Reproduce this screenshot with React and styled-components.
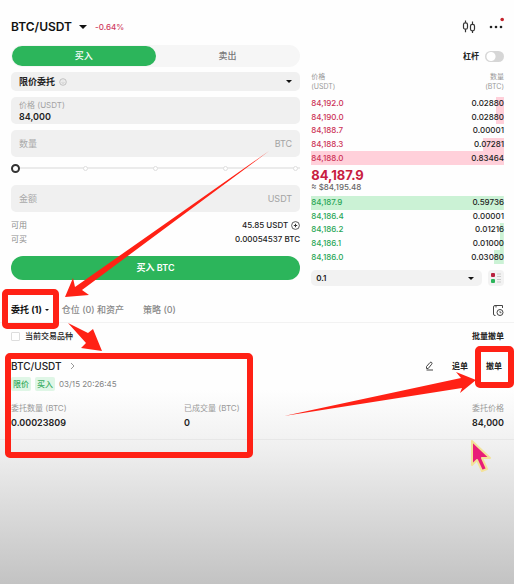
import React, { useState } from 'react'
import styled, { createGlobalStyle, css } from 'styled-components'

const GlobalStyle = createGlobalStyle`
  * {
    box-sizing: border-box;
  }

  body {
    margin: 0;
    color: #222;
    font-family: Inter, "Liberation Sans", "Noto Sans CJK SC", sans-serif;
    font-size: 9px;
    line-height: 14px;
  }

  button,
  input,
  select {
    margin: 0;
    padding: 0;
    border: 0;
    background: none;
    color: inherit;
    font: inherit;
  }
`

const Page = styled.div`
  position: relative;
  min-height: 100vh;
  background: linear-gradient(
    #fefefe 0,
    #fefefe 390px,
    #f0f0f0 446px,
    #dedede 500px,
    #c3c3c3 584px
  );
`

const Header = styled.header`
  display: flex;
  align-items: center;
  padding: 17px 10px 8px 11px;
`

const PairButton = styled.button`
  display: flex;
  align-items: center;
  gap: 7px;
  color: #111;
  font-size: 12px;
  font-weight: 600;
  line-height: 18px;
`

const Caret = styled.span`
  width: 0;
  height: 0;
  border: ${({ $size = 3 }) => $size}px solid transparent;
  border-top-color: #111;
  border-bottom: 0;
`

const Change = styled.span`
  margin-left: 8px;
  color: #cf3b60;
  font-size: 8px;
  font-weight: 500;
`

const HeaderActions = styled.div`
  display: flex;
  gap: 12px;
  margin-left: auto;
`

const IconButton = styled.button`
  display: flex;
  align-items: center;
  justify-content: center;
`

const Trade = styled.main`
  display: grid;
  grid-template-columns: 3fr 2fr;
  gap: 11px;
  padding: 0 10px 0 11px;
`

const Form = styled.form`
  display: flex;
  flex-direction: column;
`

const Sides = styled.div`
  display: grid;
  grid-template-columns: 1fr 1fr;
  height: 22px;
  padding: 1px;
  border-radius: 11px;
  background: #f6f6f6;
`

const Side = styled.button`
  border-radius: 10px;
  color: #777;
  font-weight: 500;

  ${({ $active }) =>
    $active &&
    css`
      background: #2cb55b;
      color: #fff;
    `}
`

const OrderType = styled.button`
  display: flex;
  align-items: center;
  gap: 4px;
  height: 19px;
  margin-top: 5px;
  padding: 0 8px;
  border-radius: 5px;
  background: #f0f0f0;
  font-weight: 600;

  ${Caret} {
    margin-left: auto;
  }
`

const Field = styled.label`
  display: flex;
  flex-direction: ${({ $stacked }) => ($stacked ? 'column' : 'row')};
  align-items: ${({ $stacked }) => ($stacked ? 'stretch' : 'center')};
  justify-content: center;
  height: 27px;
  margin-top: 6px;
  padding: 0 8px;
  border-radius: 5px;
  background: #f0f0f0;
  color: #a3a3a3;
  font-size: ${({ $stacked }) => ($stacked ? 8 : 9)}px;
  line-height: 12px;

  input {
    flex: ${({ $stacked }) => ($stacked ? 'none' : 1)};
    min-width: 0;
    color: #222;
    font-size: 9px;
    font-weight: 600;
    outline: none;
  }

  input::placeholder {
    color: #a9a9a9;
    font-weight: 400;
  }
`

const Slider = styled.div`
  display: grid;
  align-items: center;
  height: 22px;

  > * {
    grid-area: 1 / 1;
  }

  input {
    z-index: 1;
    appearance: none;
    width: 100%;
  }

  input::-webkit-slider-thumb {
    appearance: none;
    width: 9px;
    height: 9px;
    border: 2px solid #333;
    border-radius: 50%;
    background: #fff;
  }
`

const Steps = styled.div`
  display: flex;
  align-items: center;
  justify-content: space-between;
  padding: 0 2px;
  background: linear-gradient(#ebebeb, #ebebeb) center / 100% 2px no-repeat;

  span {
    width: 5px;
    height: 5px;
    border: 1px solid #dedede;
    border-radius: 50%;
    background: #fff;
  }
`

const Balance = styled.dl`
  display: grid;
  grid-template-columns: auto 1fr;
  margin: 6px 0 10px;

  dt {
    color: #8b8b8b;
    font-size: 8px;
  }

  dd {
    display: flex;
    align-items: center;
    justify-content: flex-end;
    gap: 3px;
    margin: 0;
    font-size: 8px;
    font-weight: 500;
  }
`

const Submit = styled.button`
  height: 24px;
  border-radius: 12px;
  background: #2cb55b;
  color: #fff;
  font-size: 9px;
  font-weight: 600;
`

const Book = styled.section`
  display: flex;
  flex-direction: column;
`

const Leverage = styled.label`
  display: flex;
  align-items: center;
  justify-content: flex-end;
  gap: 6px;
  height: 22px;
  font-size: 8px;
  font-weight: 600;
`

const Switch = styled.input`
  appearance: none;
  width: 19px;
  height: 11px;
  border-radius: 6px;
  background: radial-gradient(circle at 6px 50%, #fff 4px, #d6d6d6 5px);

  &:checked {
    background: radial-gradient(circle at 13px 50%, #fff 4px, #2cb55b 5px);
  }
`

const Levels = styled.table`
  width: 100%;
  height: ${({ $head }) => ($head ? 98 : 68)}px;
  border-collapse: collapse;
  font-size: 8px;
  font-weight: 500;
  line-height: 13px;

  th {
    height: 30px;
    padding: 0;
    color: #999;
    font-size: 7px;
    font-weight: 400;
    line-height: 10px;
    text-align: left;
  }

  td {
    padding: 0;
  }

  th:last-child,
  td:last-child {
    text-align: right;
  }
`

const tones = {
  sell: { text: '#cc3358', bar: '#ffd0da' },
  buy: { text: '#2aa657', bar: '#cbf2d5' }
}

const Level = styled.tr`
  background: linear-gradient(
    to left,
    ${({ $side, $depth }) =>
      `${tones[$side].bar} ${$depth}%, transparent ${$depth}%`}
  );

  td:first-child {
    color: ${({ $side }) => tones[$side].text};
  }
`

const LastPrice = styled.div`
  padding-top: 2px;
  color: #c8203f;
  font-size: 13px;
  font-weight: 700;
  line-height: 16px;
`

const FiatPrice = styled.div`
  margin-bottom: 4px;
  color: #666;
  font-size: 8px;
  font-weight: 500;
  line-height: 9px;
`

const BookFooter = styled.div`
  display: grid;
  grid-template-columns: 1fr 16px;
  gap: 6px;
  margin-top: 6px;
`

const SelectBox = styled.div`
  display: flex;
  align-items: center;
  height: 16px;
  padding-right: 8px;
  border-radius: 5px;
  background: #f2f2f2;

  select {
    flex: 1;
    appearance: none;
    padding-left: 5px;
    font-size: 8px;
    font-weight: 600;
  }
`

const BookView = styled(IconButton)`
  border-radius: 4px;
  background: #f2f2f2;
`

const Tabs = styled.nav`
  display: flex;
  align-items: center;
  gap: 13px;
  margin-top: 12px;
  padding: 0 10px 0 11px;
  border-bottom: 1px solid #f2f2f2;

  ${IconButton} {
    margin-left: auto;
  }
`

const Tab = styled.button`
  display: flex;
  align-items: center;
  gap: 3px;
  height: 24px;
  margin-right: ${({ $active }) => ($active ? 0 : 6)}px;
  color: ${({ $active }) => ($active ? '#111' : '#888')};
  font-weight: ${({ $active }) => ($active ? 700 : 500)};
`

const Filter = styled.div`
  display: flex;
  align-items: center;
  justify-content: space-between;
  height: 26px;
  padding: 0 10px 0 11px;
  font-size: 8px;
  font-weight: 600;

  label {
    display: flex;
    align-items: center;
    gap: 5px;
    font-weight: 500;
  }

  input {
    appearance: none;
    width: 9px;
    height: 9px;
    border: 1px solid #ddd;
    border-radius: 1px;
    background: #fff;
  }
`

const Order = styled.article`
  padding: 7px 10px 8px 11px;
  border-bottom: 1px solid #e7e7e7;
`

const OrderHead = styled.div`
  display: flex;
  align-items: center;
  gap: 18px;
  height: 20px;
  padding-right: 2px;
  font-size: 8px;
  font-weight: 600;
`

const OrderPair = styled.button`
  display: flex;
  align-items: center;
  gap: 8px;
  margin-right: auto;
  color: #222;
  font-size: 10px;
  font-weight: 500;
`

const OrderMeta = styled.div`
  display: flex;
  align-items: center;
  gap: 4px;
  margin: 1px 0 10px;
  color: #858585;
  font-size: 8px;
`

const Tag = styled.span`
  padding: 0 2px;
  border-radius: 2px;
  background: #dff6e6;
  color: #37ac61;
  font-weight: 500;
`

const Figures = styled.dl`
  display: grid;
  grid-template-columns: 173fr 160fr 160fr;
  margin: 0;

  div:last-child {
    text-align: right;
  }

  dt {
    color: #999;
    font-size: 8px;
  }

  dd {
    margin: 0;
    color: #222;
    font-size: 9px;
    font-weight: 600;
    line-height: 16px;
  }
`

const Frame = styled.div`
  position: absolute;
  top: ${({ $y }) => $y}px;
  left: ${({ $x }) => $x}px;
  width: ${({ $w }) => $w}px;
  height: ${({ $h }) => $h}px;
  border: 6px solid #ff2115;
  border-radius: 5px;
  pointer-events: none;
`

const Marks = styled.svg`
  position: absolute;
  top: 0;
  left: 0;
  pointer-events: none;
`

const asks = [
  ['84,192.0', '0.02880', 4],
  ['84,190.0', '0.02880', 4],
  ['84,188.7', '0.00001', 0],
  ['84,188.3', '0.07281', 11],
  ['84,188.0', '0.83464', 100]
]

const bids = [
  ['84,187.9', '0.59736', 100],
  ['84,186.4', '0.00001', 0],
  ['84,186.2', '0.01216', 2],
  ['84,186.1', '0.01000', 2],
  ['84,186.0', '0.03080', 5]
]

const CandlesIcon = () => (
  <svg width="14" height="14" viewBox="0 0 14 14" fill="none" stroke="#333">
    <rect x="1.5" y="2.8" width="4" height="6.4" rx="1.8" strokeWidth="1.2" />
    <path d="M3.5 .5v2.300M3.500 9.200v3M10.500 1.500v2.800M10.500 10.800v2.200" strokeWidth="1.2" />
    <rect x="8.500" y="4.300" width="4" height="6.500" rx="1.800" strokeWidth="1.2" />
  </svg>
)

const MoreIcon = () => (
  <svg width="16" height="20" viewBox="0 0 16 20" fill="#222">
    <circle cx="3" cy="10" r="1.300" />
    <circle cx="8" cy="10" r="1.300" />
    <circle cx="13" cy="10" r="1.300" />
    <circle cx="14.200" cy="2.500" r="1.800" fill="#c4242c" />
  </svg>
)

const InfoIcon = () => (
  <svg width="8" height="8" viewBox="0 0 8 8" fill="none" stroke="#b5b5b5">
    <circle cx="4" cy="4" r="3.300" strokeWidth=".8" />
    <path d="M2.500 4.600q1.500 1.300 3 0M2.800 3h.5M4.700 3h.5" strokeWidth=".7" />
  </svg>
)

const AddIcon = () => (
  <svg width="9" height="9" viewBox="0 0 9 9" fill="none" stroke="#333">
    <circle cx="4.500" cy="4.500" r="3.900" strokeWidth=".8" />
    <path d="M4.500 2.800v3.400M2.800 4.500h3.400" strokeWidth="1" />
  </svg>
)

const BookIcon = () => (
  <svg width="12" height="12" viewBox="0 0 12 12">
    <rect x="1" y="1" width="4" height="4" rx="1" fill="#b8233f" />
    <rect x="1" y="7" width="4" height="4" rx="1" fill="#2cb55b" />
    <path d="M7 2h4M7 4.500h4M7 7.500h4M7 10h4" stroke="#ccc" />
  </svg>
)

const HistoryIcon = () => (
  <svg width="12" height="13" viewBox="0 0 12 13" fill="none" stroke="#444">
    <path d="M3.500 11.500H3q-1.500 0-1.500-1.500V3q0-1.500 1.500-1.500h7.500V4M4 1.500v2" />
    <circle cx="8" cy="8.500" r="3" />
    <path d="M8 7v1.700h1.500" strokeWidth=".8" />
  </svg>
)

const EditIcon = () => (
  <svg width="9" height="10" viewBox="0 0 9 10" fill="none" stroke="#444">
    <path d="M1.500 7.500V5.500L5 1.500q1-.8 1.700 0t0 1.700L3.200 7.500zM1.500 9h6.500" />
  </svg>
)

const ChevronIcon = () => (
  <svg width="5" height="8" viewBox="0 0 5 8" fill="none" stroke="#999">
    <path d="M1 1l3 3-3 3" />
  </svg>
)

const Annotations = () => (
  <>
    <Frame $x={2} $y={289} $w={57} $h={40} />
    <Frame $x={5} $y={353} $w={248} $h={105} />
    <Frame $x={475} $y={346} $w={39} $h={42} />
    <Marks width="514" height="584" viewBox="0 0 514 584">
      <g fill="#ff2115">
        <path d="M269 151L75 287l-2-9-8 19 24-2-7-5z" />
        <path d="M68 323l20 10 5-4 9 22-21-3 5-5z" />
        <path d="M284 416l178-28-2 5 16-13-20-8 5 6z" />
      </g>
      <path
        d="M472 441v24l5-5 5 11 5-2-5-11 8 0z"
        fill="#e91e78"
        stroke="#f3e29a"
        strokeWidth="2"
        strokeLinejoin="round"
      />
    </Marks>
  </>
)

const OrderForm = () => {
  const [side, setSide] = useState('buy')
  const [price, setPrice] = useState('84,000')

  return (
    <Form onSubmit={e => e.preventDefault()}>
      <Sides>
        <Side type="button" $active={side === 'buy'} onClick={() => setSide('buy')}>
          买入
        </Side>
        <Side type="button" $active={side === 'sell'} onClick={() => setSide('sell')}>
          卖出
        </Side>
      </Sides>
      <OrderType type="button">
        限价委托
        <InfoIcon />
        <Caret />
      </OrderType>
      <Field $stacked>
        价格 (USDT)
        <input value={price} onChange={e => setPrice(e.target.value)} />
      </Field>
      <Field>
        <input placeholder="数量" aria-label="数量" />
        BTC
      </Field>
      <Slider>
        <Steps>
          {[0, 25, 50, 75, 100].map(step => (
            <span key={step} />
          ))}
        </Steps>
        <input type="range" min="0" max="100" defaultValue="0" aria-label="数量" />
      </Slider>
      <Field>
        <input placeholder="金额" aria-label="金额" />
        USDT
      </Field>
      <Balance>
        <dt>可用</dt>
        <dd>
          45.85 USDT <AddIcon />
        </dd>
        <dt>可买</dt>
        <dd>0.00054537 BTC</dd>
      </Balance>
      <Submit type="submit">买入 BTC</Submit>
    </Form>
  )
}

const renderLevels = (levels, side) =>
  levels.map(([price, amount, depth]) => (
    <Level key={price} $side={side} $depth={depth}>
      <td>{price}</td>
      <td>{amount}</td>
    </Level>
  ))

const OrderBook = () => (
  <Book>
    <Leverage>
      杠杆
      <Switch type="checkbox" role="switch" />
    </Leverage>
    <Levels $head>
      <thead>
        <tr>
          <th>
            价格
            <br />
            (USDT)
          </th>
          <th>
            数量
            <br />
            (BTC)
          </th>
        </tr>
      </thead>
      <tbody>{renderLevels(asks, 'sell')}</tbody>
    </Levels>
    <LastPrice>84,187.9</LastPrice>
    <FiatPrice>≈ $84,195.48</FiatPrice>
    <Levels>
      <tbody>{renderLevels(bids, 'buy')}</tbody>
    </Levels>
    <BookFooter>
      <SelectBox>
        <select aria-label="价格精度">
          <option>0.1</option>
        </select>
        <Caret />
      </SelectBox>
      <BookView type="button" aria-label="盘口">
        <BookIcon />
      </BookView>
    </BookFooter>
  </Book>
)

const OpenOrder = () => (
  <Order>
    <OrderHead>
      <OrderPair>
        BTC/USDT
        <ChevronIcon />
      </OrderPair>
      <IconButton aria-label="编辑">
        <EditIcon />
      </IconButton>
      <button>追单</button>
      <button>撤单</button>
    </OrderHead>
    <OrderMeta>
      <Tag>限价</Tag>
      <Tag>买入</Tag>
      <span>03/15 20:26:45</span>
    </OrderMeta>
    <Figures>
      <div>
        <dt>委托数量 (BTC)</dt>
        <dd>0.00023809</dd>
      </div>
      <div>
        <dt>已成交量 (BTC)</dt>
        <dd>0</dd>
      </div>
      <div>
        <dt>委托价格</dt>
        <dd>84,000</dd>
      </div>
    </Figures>
  </Order>
)

const App = () => (
  <Page>
    <GlobalStyle />
    <Header>
      <PairButton>
        BTC/USDT
        <Caret $size={4} />
      </PairButton>
      <Change>-0.64%</Change>
      <HeaderActions>
        <IconButton aria-label="K线">
          <CandlesIcon />
        </IconButton>
        <IconButton aria-label="更多">
          <MoreIcon />
        </IconButton>
      </HeaderActions>
    </Header>
    <Trade>
      <OrderForm />
      <OrderBook />
    </Trade>
    <Tabs>
      <Tab $active>
        委托 (1)
        <Caret $size={2} />
      </Tab>
      <Tab>仓位 (0) 和资产</Tab>
      <Tab>策略 (0)</Tab>
      <IconButton aria-label="历史">
        <HistoryIcon />
      </IconButton>
    </Tabs>
    <Filter>
      <label>
        <input type="checkbox" />
        当前交易品种
      </label>
      <button>批量撤单</button>
    </Filter>
    <OpenOrder />
    <Annotations />
  </Page>
)

export default App
